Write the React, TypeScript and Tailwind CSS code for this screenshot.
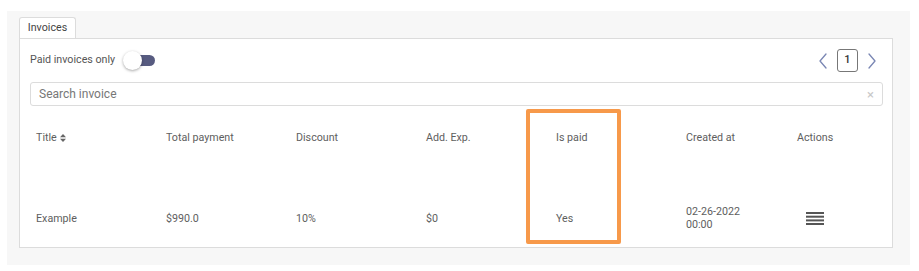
import { useState } from 'react'

const columns = [
  'Title',
  'Total payment',
  'Discount',
  'Add. Exp.',
  'Is paid',
  'Created at',
  'Actions',
]

const gridCols = 'grid grid-cols-[130px_130px_130px_130px_130px_111px_1fr]'

const Chevron = ({ dir }: { dir: 'left' | 'right' }) => (
  <svg width="10" height="16" viewBox="0 0 10 16" fill="none">
    <polyline
      points={dir === 'left' ? '8,1 2,8 8,15' : '2,1 8,8 2,15'}
      stroke="#7a86b3"
      strokeWidth="1.3"
      strokeLinecap="round"
      strokeLinejoin="round"
    />
  </svg>
)

const SortIcon = () => (
  <svg width="6" height="8" viewBox="0 0 6 8" className="ml-[3px]">
    <polygon points="3,0 6,3.2 0,3.2" fill="#666" />
    <polygon points="0,4.8 6,4.8 3,8" fill="#666" />
  </svg>
)

const MenuIcon = () => (
  <svg width="18" height="13" viewBox="0 0 18 13">
    <rect x="0" y="0" width="18" height="2" fill="#555" />
    <rect x="0" y="3.7" width="18" height="2" fill="#555" />
    <rect x="0" y="7.4" width="18" height="2" fill="#555" />
    <rect x="0" y="11" width="18" height="2" fill="#555" />
  </svg>
)

const App = () => {
  const [paidOnly, setPaidOnly] = useState(false)
  const [search, setSearch] = useState('')

  return (
    <div
      className="h-[271px] w-[919px] bg-white pl-[7px] pt-[11px] text-[#5e5e5e]"
      style={{ fontFamily: 'Roboto, "Liberation Sans", sans-serif' }}
    >
      <div className="relative h-[254px] w-[903px] bg-[#f7f7f7] pl-[12px] pt-[6px]">
        {/* tab */}
        <div className="flex h-[21px] w-[57px] items-center justify-center rounded-t-[3px] border border-b-0 border-[#dcdcdc] bg-white text-[10.7px] text-[#444]">
          Invoices
        </div>

        {/* content box */}
        <div className="h-[210px] w-[874px] border border-[#dcdcdc] bg-white pl-[10px] pr-[9px] pt-[10px]">
          <div className="flex h-[23px] items-center justify-between">
            <div className="flex items-center">
              <span className="text-[10.7px] text-[#555]">Paid invoices only</span>
              <button
                className="relative ml-[8px] h-[19px] w-[32px]"
                onClick={() => setPaidOnly(!paidOnly)}
              >
                <span className="absolute left-[6px] top-[4px] h-[11px] w-[26px] rounded-full bg-[#575b80]" />
                <span className="absolute left-0 top-0 h-[19px] w-[19px] rounded-full bg-white shadow-[0_1px_3px_rgba(0,0,0,0.35)]" />
              </button>
            </div>
            <div className="mr-[6px] flex items-center gap-[9px]">
              <Chevron dir="left" />
              <div className="flex h-[23px] w-[21px] items-center justify-center rounded-[3px] border border-[#777] text-[11px] font-medium text-[#333]">
                1
              </div>
              <Chevron dir="right" />
            </div>
          </div>

          <div className="mt-[10px] flex h-[24px] items-center rounded-[3px] border border-[#dcdcdc] px-[8px]">
            <input
              className="flex-1 bg-transparent text-[12px] text-[#555] outline-none placeholder:text-[#777]"
              placeholder="Search invoice"
              value={search}
              onChange={(e) => setSearch(e.currentTarget.value)}
            />
            <span className="text-[13px] leading-none text-[#c8c8c8]">×</span>
          </div>

          <div className={`${gridCols} h-[64px] items-center pt-[1px] text-[10.7px]`}>
            {columns.map((c) => (
              <div key={c} className="flex items-center px-[6px]">
                {c}
                {c === 'Title' && <SortIcon />}
              </div>
            ))}
          </div>

          <div className={`${gridCols} mt-[18px] h-[60px] items-center text-[10.7px] leading-[13px]`}>
            <div className="px-[6px]">Example</div>
            <div className="px-[6px]">$990.0</div>
            <div className="px-[6px]">10%</div>
            <div className="px-[6px]">$0</div>
            <div className="px-[6px]">Yes</div>
            <div className="px-[6px]">
              02-26-2022
              <br />
              00:00
            </div>
            <div className="flex pl-[15px]">
              <MenuIcon />
            </div>
          </div>
        </div>

        {/* highlight annotation */}
        <div className="absolute left-[519px] top-[98px] h-[135px] w-[95px] rounded-[2px] border-[4px] border-[#f7994a]" />
      </div>
    </div>
  )
}

export default App
